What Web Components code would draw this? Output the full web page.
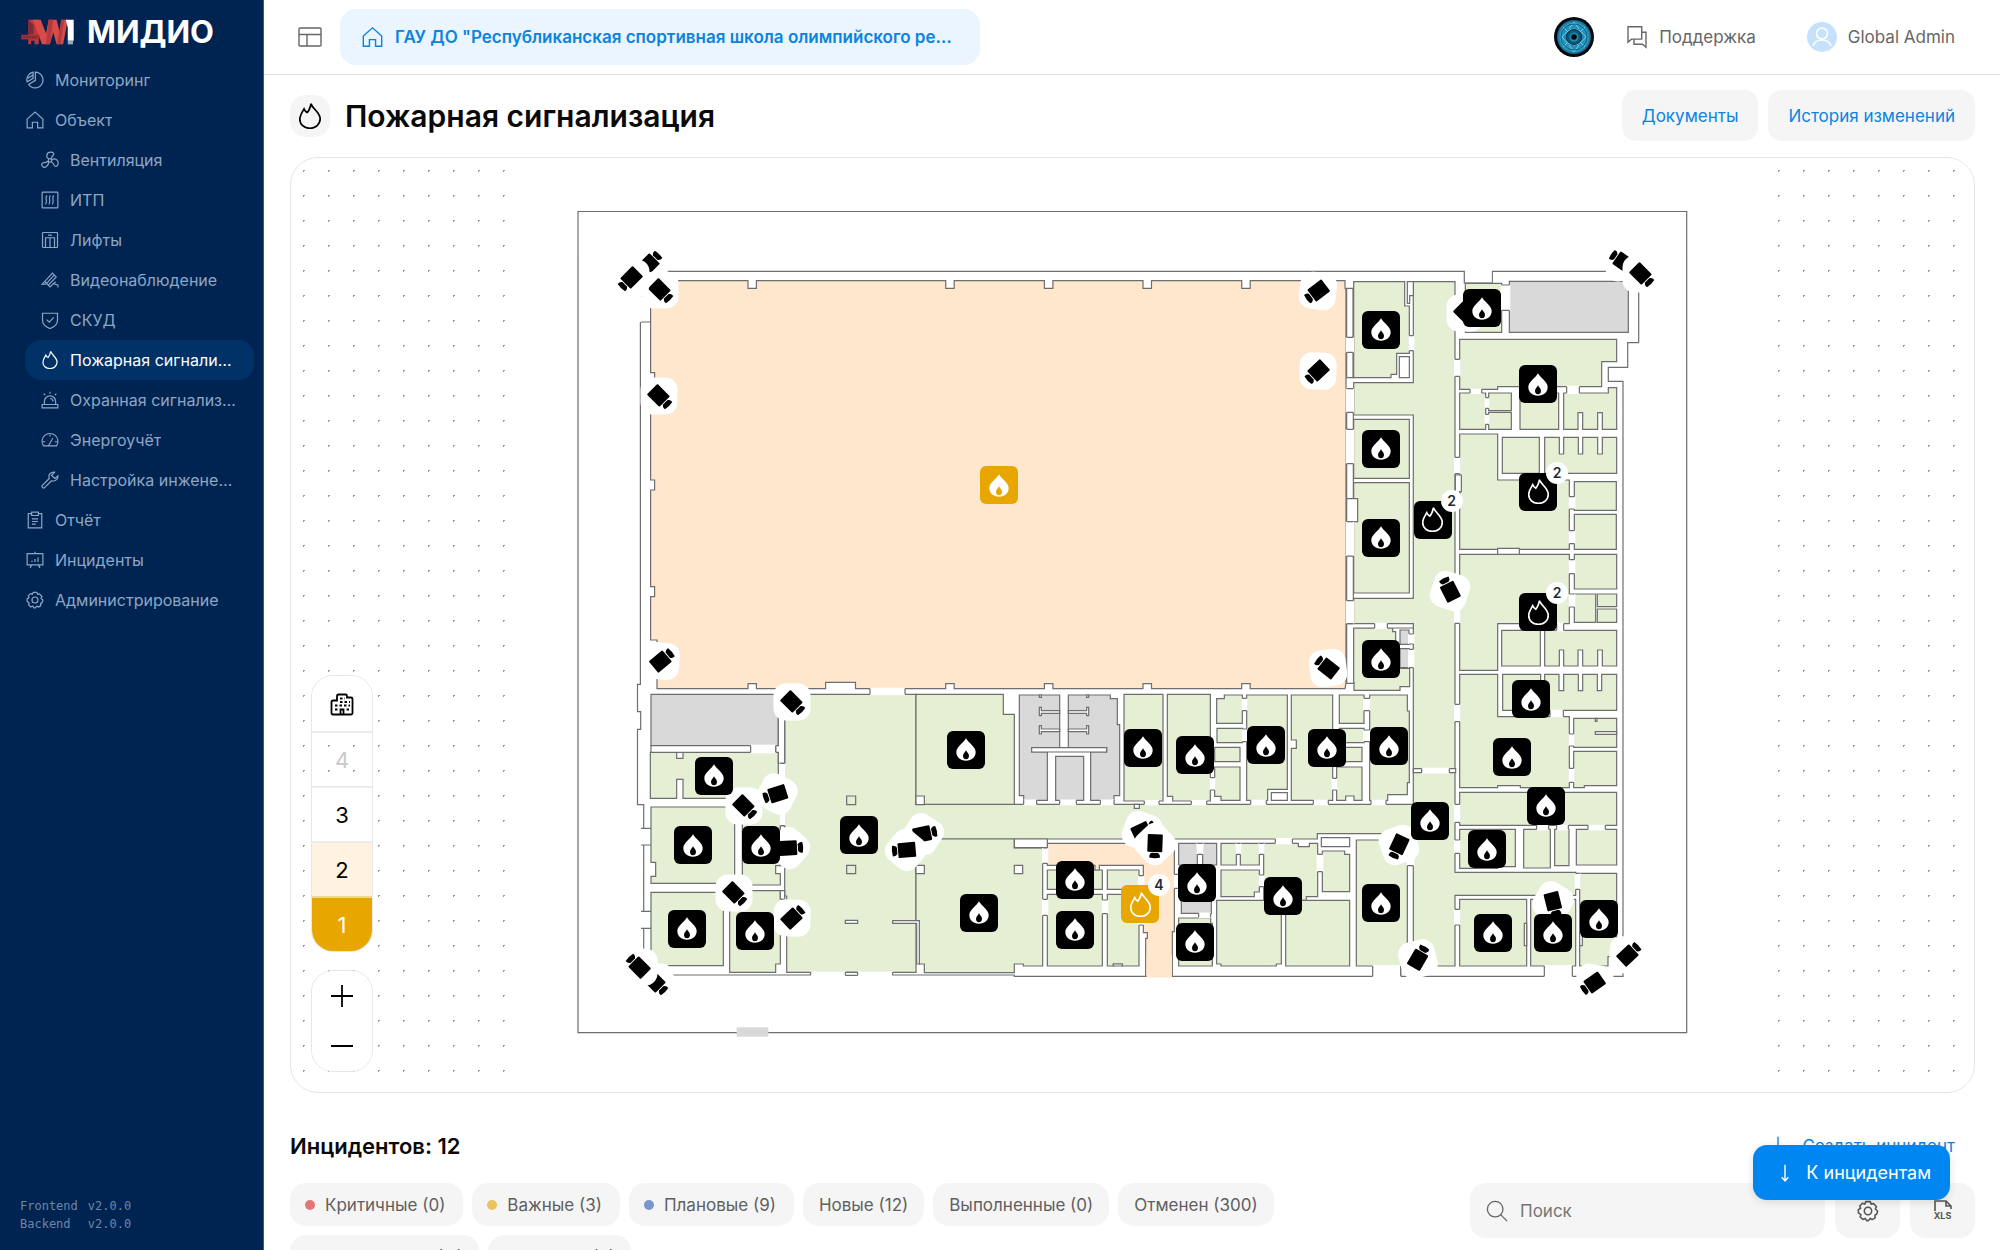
<!DOCTYPE html>
<html lang="ru">
<head>
<meta charset="utf-8">
<title>Пожарная сигнализация — Мидио</title>
<style>
html, body { margin: 0; height: 100%; }
body {
  font-family: Inter, "Noto Sans", sans-serif;
  font-size: 17px; line-height: 24px; color: #111; background: #fff; overflow: hidden;
  --navy: #002452; --navy-active: #003268; --nav-text: #8ea6c3; --blue: #0a84e0;
  --soft: #f5f5f5; --grey: #666; --line: #e6e6e6; --amber: #e8a600;
}
</style>
</head>
<body>
<app-shell>
  <side-bar slot="side"></side-bar>
  <top-bar slot="top"></top-bar>
  <page-title slot="main">Пожарная сигнализация</page-title>
  <floor-card slot="main"></floor-card>
  <incident-panel slot="main"></incident-panel>
  <jump-button slot="float">К инцидентам</jump-button>
</app-shell>

<script>
const FLAME = '<path d="M34 2C37 15 60 27 60 45C60 61 47 72 31 72C14 72 2 61 2 46C2 35 8 27 14 17C16 22 19 25 23 27C30 20 32 11 34 2Z" stroke-width="W"/>';
const ICONS = {
  monitor: ['0 0 24 24', '<path d="M12.500 1.500A10.500 10.500 0 1 1 3.500 18L12.500 12.500ZM9.500 1.500A10.500 10.500 0 0 0 1.500 14.500L9.500 9.800ZM2.500 9.500 9 5.800"/>'],
  home: ['0 0 24 24', '<path d="M1.500 10.800 12 1.500 22.500 10.800V22.500H15.500V15H8.500V22.500H1.500Z"/>'],
  fan: ['0 0 24 24', '<circle cx="12" cy="12.500" r="2.300"/><path d="M10.500 10.500C6 9 7 1.500 13 1.500C17 1.500 18 4 16 6C14 8 14 9 13.500 10.500M14.500 12C18 8.500 24 12 22.700 17.500C21.800 21 19 21.500 17.500 19C16.500 16.500 15.500 15.500 14 14.500M10 14C11 19 5 24 2 20.500C0 18 1 15.500 4 15.500C6.500 15.500 8 14.500 9.700 13.200"/>'],
  heat: ['0 0 24 24', '<rect x="1.500" y="1.500" width="21" height="21" rx="1"/><path d="M8 6C4 10 10 13 6 18M12.500 6C8.500 10 14.500 13 10.500 18M17 6C13 10 19 13 15 18"/>'],
  lift: ['0 0 24 24', '<rect x="2" y="2" width="20" height="20" rx="1"/><path d="M6 22V9H18V22M12 9V22M9.500 5.500H14.500"/>'],
  camera: ['0 0 26 24', '<path d="M5.500 14 16.500 2 22 7.500 10.500 19.500ZM8.500 16.500 19 5M5.500 14 1.500 18H7.500M10.500 19.500 13 22 21 14.500M18 17 24.500 19.500V23"/>'],
  shield: ['0 0 24 24', '<path d="M2 3H22V12C22 18 17.500 21.500 12 23.500C6.500 21.500 2 18 2 12ZM7.500 11.500 11 15 17 8.500"/>'],
  siren: ['0 0 24 24', '<path d="M4.500 18V14A7.500 7.500 0 0 1 19.500 14V18M1.500 18H22.500V22.500H1.500ZM12 10A4 4 0 0 1 16 14M12 1V3.500M3.500 3.500 5.500 5.500M20.500 3.500 18.500 5.500"/>'],
  gauge: ['0 0 26 24', '<path d="M3.500 20.500A11.500 11.500 0 1 1 22.500 20.500ZM11 20 17 9.500M13 4V7M2.500 14.500H6M20 14.500H23.500"/>'],
  wrench: ['0 0 24 24', '<path d="M16.500 1.500C12 2 9.500 5.500 11 10L1.500 19.500C0.500 21 3 23.500 4.500 22.500L14 13C19 14.500 23 10.500 22.500 6.500L18.500 10 14 6 18 1.700Z"/>'],
  report: ['0 0 24 24', '<path d="M7.500 3.500H3V22.500H21V3.500H16.500M7.500 1.500H16.500V6H7.500ZM8 10.500H16M8 14H16M8 17.500H13"/>'],
  board: ['0 0 24 24', '<path d="M1.500 3.500H22.500V18.500H1.500ZM12 1V3.500M7.500 18.500 5.500 22.500M16.500 18.500 18.500 22.500M8 13V14.500M12 10.500V14.500M16 8.500V14.500"/>'],
  gear: ['0 0 24 24', '<path d="M9.500 1.800H14.500L15.500 4.500 18 3.800 21.300 7.300 20 9.800 22.500 12 21.500 15.500 19.500 16.500 19.800 19.500 16.500 21.500 14.500 20 12.500 22.500H10.500L9 20 6.500 21.300 3.500 18.500 4.300 16 1.500 14V10.500L4 9 3 6.500 6 3.500 8.500 4.500Z" stroke-linejoin="round"/><circle cx="12" cy="12" r="4"/>'],
  layout: ['0 0 24 20', '<rect x="1" y="1" width="22" height="18" rx="1"/><path d="M1 7.500H23M9 7.500V19"/>'],
  chat: ['0 0 24 28', '<path d="M1.500 2H17.500V16.500H5.500L1.500 20ZM17.500 8.500H22.500V26L18.500 22.500H8.500V16.500"/>'],
  search: ['0 0 24 24', '<circle cx="10" cy="10" r="8.500"/><path d="M16 16 23 23"/>'],
  arrow: ['0 0 12 24', '<path d="M6 2V21M2 17 6 21.500 10 17"/>'],
  plus: ['0 0 24 24', '<path d="M12 1V23M1 12H23"/>'],
  minus: ['0 0 24 24', '<path d="M1 12H23"/>'],
  city: ['0 0 24 24', '<path d="M7 22.500H3Q1.500 22.500 1.500 21V10Q1.500 8.500 3 8.500H7V4Q7 2.500 8.500 2.500H15.500Q17 2.500 17 4V5.500H21Q22.500 5.500 22.500 7V21Q22.500 22.500 21 22.500ZM10.500 22.500V17.500H13.500V22.500"/><path stroke-dasharray="2.500 2" d="M10 6.500H15M10 10H20M5 13.500H20M5 17.500H9M16.500 17.500H20"/>'],
  flame: ['0 0 62 74', FLAME],
};

/* Shared base: renders a static template into an open shadow root. */
class Base extends HTMLElement {
  connectedCallback() {
    if (this.shadowRoot) return;
    this.attachShadow({ mode: 'open' }).innerHTML = this.view();
  }
}

customElements.define('ui-icon', class extends Base {
  view() {
    const [box, body] = ICONS[this.getAttribute('name')];
    const w = this.getAttribute('weight') || 1.6;
    return `<style>:host{display:inline-flex;flex:none;width:18px;height:18px}svg{width:100%;height:100%;fill:none;stroke:currentColor}</style>
    <svg viewBox="${box}" stroke-width="${w}" aria-hidden="true">${body.replace('"W"', `"${w}"`)}</svg>`;
  }
});

customElements.define('app-shell', class extends Base {
  view() {
    return `<style>
    :host{display:grid;grid-template-columns:264px minmax(0,1fr);height:100vh;overflow:hidden;position:relative}
    .col{display:flex;flex-direction:column;min-width:0;overflow:hidden}
    main{display:flex;flex-direction:column;padding:15px 25px 0 26px;min-height:0;overflow:hidden}
    </style><slot name="side"></slot><div class="col"><slot name="top"></slot><main><slot name="main"></slot></main></div><slot name="float"></slot>`;
  }
});

customElements.define('nav-item', class extends Base {
  view() {
    return `<style>
    :host{display:block}
    a{display:flex;align-items:center;gap:11px;height:40px;box-sizing:border-box;padding:0 16px 0 17px;border-radius:16px;color:var(--nav-text);text-decoration:none;font-size:16px}
    :host([sub]) a{margin-left:16px;padding-left:16px}
    :host([active]) a{background:var(--navy-active);color:#fff}
    span{overflow:hidden;text-overflow:ellipsis;white-space:nowrap}
    </style><a href="#"><ui-icon name="${this.getAttribute('icon')}" weight="${this.getAttribute('icon') === 'flame' ? 5 : 1.6}"></ui-icon><span><slot></slot></span></a>`;
  }
});

customElements.define('side-bar', class extends Base {
  view() {
    return `<style>
    :host{display:flex;flex-direction:column;background:var(--navy);border-right:1px solid #2f5f98;box-sizing:border-box}
    .logo{display:flex;align-items:center;gap:12px;height:60px;padding:4px 20px 0;box-sizing:border-box;color:#fff;font-size:31px;line-height:36px;font-weight:700}
    .logo svg{width:55px;height:28px}
    nav{flex:1;padding:0 9px}
    dl{display:grid;grid-template-columns:auto auto;justify-content:start;column-gap:10px;margin:0;padding:0 20px 17px;font:12px/18px "DejaVu Sans Mono","Liberation Mono",monospace;color:#6d86a6}
    dt,dd{margin:0}
    </style>
    <div class="logo"><svg viewBox="60 55 165 85" aria-hidden="true">
      <path fill="#b8383c" d="M84 60H116V135H103V124H93V135H84Z"/><path fill="#7a2b3c" d="M84 60 100 78V104H84Z"/>
      <path fill="#d94b49" d="M98 60H122L138 102 146 60H170L180 98 184 60H204L190 135H170L160 98 150 135H126Z"/>
      <path fill="#b43a40" d="M146 60H160L150 135H138ZM184 60H194L182 135H172Z"/>
      <path fill="#a03238" d="M63 106H118V120H63Z"/><path stroke="#5e1f2b" stroke-width="3" d="M68 113H112" stroke-dasharray="6 3"/>
      <path fill="#fff" d="M198 60H222V124H204V84Z"/><path fill="#8fa6c4" d="M204 124H220V135H204Z"/></svg>МИДИО</div>
    <nav>
      <nav-item icon="monitor">Мониторинг</nav-item><nav-item icon="home">Объект</nav-item>
      <nav-item sub icon="fan">Вентиляция</nav-item><nav-item sub icon="heat">ИТП</nav-item>
      <nav-item sub icon="lift">Лифты</nav-item><nav-item sub icon="camera">Видеонаблюдение</nav-item>
      <nav-item sub icon="shield">СКУД</nav-item><nav-item sub active icon="flame">Пожарная сигнализация</nav-item>
      <nav-item sub icon="siren">Охранная сигнализация</nav-item><nav-item sub icon="gauge">Энергоучёт</nav-item>
      <nav-item sub icon="wrench">Настройка инженерных систем</nav-item>
      <nav-item icon="report">Отчёт</nav-item><nav-item icon="board">Инциденты</nav-item><nav-item icon="gear">Администрирование</nav-item>
    </nav>
    <dl><dt>Frontend</dt><dd>v2.0.0</dd><dt>Backend</dt><dd>v2.0.0</dd></dl>`;
  }
});

customElements.define('top-bar', class extends Base {
  view() {
    return `<style>
    :host{display:flex;align-items:center;height:75px;flex:none;border-bottom:1px solid #e0e0e0;padding:0 45px 0 34px;color:var(--grey);box-sizing:border-box}
    button{font:inherit;color:inherit;border:0;background:none;padding:0;display:flex;align-items:center;cursor:pointer}
    .menu ui-icon{width:24px;height:24px}
    .site{margin-left:18px;width:640px;height:56px;padding:0 28px 0 22px;gap:12px;border-radius:16px;background:#eaf5ff;color:var(--blue);font-weight:600}
    .site ui-icon{width:21px;height:22px}
    .site span{overflow:hidden;text-overflow:ellipsis;white-space:nowrap}
    .eye{margin-left:auto;width:40px;height:40px}
    .eye svg{width:40px;height:40px}
    .help{margin-left:32px;gap:11px}.help ui-icon{width:22px;height:24px}
    .user{margin-left:51px;gap:11px}.user svg{width:30px;height:30px}
    </style>
    <button class="menu" aria-label="Меню"><ui-icon name="layout" weight="1.4"></ui-icon></button>
    <button class="site"><ui-icon name="home"></ui-icon><span>ГАУ ДО "Республиканская спортивная школа олимпийского резерва"</span></button>
    <button class="eye" aria-label="Наблюдение"><svg viewBox="0 0 40 40"><defs><radialGradient id="e"><stop offset="0" stop-color="#0d3f58"/><stop offset=".45" stop-color="#1b7ea8"/><stop offset=".8" stop-color="#2ba0cc"/><stop offset="1" stop-color="#15607f"/></radialGradient></defs>
      <circle cx="20" cy="20" r="20" fill="#04090e"/><circle cx="20" cy="20" r="17" fill="url(#e)"/>
      <g fill="none" stroke="#6fd0ea" stroke-width="1"><path d="M8 20Q20 4 32 20Q20 36 8 20ZM20 5 15 12M20 5 25 12M20 35 15 28M20 35 25 28M9 10 14 15M31 10 26 15M9 30 14 25M31 30 26 25"/><circle cx="20" cy="20" r="13" stroke="#10607f"/></g>
      <circle cx="20" cy="20" r="7.500" fill="#0f5878" stroke="#062c40"/><circle cx="20" cy="20" r="4.500" fill="#2089b0"/><circle cx="20" cy="20" r="2.800" fill="#020a10"/></svg></button>
    <button class="help"><ui-icon name="chat" weight="1.6"></ui-icon>Поддержка</button>
    <button class="user"><svg viewBox="0 0 30 30"><circle cx="15" cy="15" r="15" fill="#c6e1f9"/><g fill="none" stroke="#fff" stroke-width="1.600"><circle cx="15" cy="11.500" r="5.500"/><path d="M6 24Q8 18 15 18T24 24"/></g></svg>Global Admin</button>`;
  }
});

customElements.define('page-title', class extends Base {
  view() {
    return `<style>
    :host{display:flex;align-items:center;gap:10px;flex:none}
    .ic{display:flex;align-items:center;justify-content:center;width:40px;height:42px;border-radius:16px;background:var(--soft)}
    .ic ui-icon{width:22px;height:26px;color:#000}
    h1{margin:0 auto 0 5px;font-size:30px;line-height:38px;font-weight:600;color:#0a0a0a}
    button{font:inherit;height:51px;padding:0 20px;border:0;border-radius:14px;background:var(--soft);color:var(--blue);cursor:pointer}
    </style><span class="ic"><ui-icon name="flame" weight="5"></ui-icon></span><h1><slot></slot></h1><button>Документы</button><button>История изменений</button>`;
  }
});

/* ---------- Floor plan geometry ----------
   Every wing has its own origin; its figures are in thirds of a plan unit. */
const room = (cls, d) => `<path class="${cls}" d="${d}"/>`;
const vDoor = (x1, x2, y1, y2) => `<path class="w" d="M${x1 - 3} ${y1}H${x2 + 3}V${y2}H${x1 - 3}Z"/><path d="M${x1} ${y1}H${x2}M${x1} ${y2}H${x2}"/>`;
const hDoor = (y1, y2, x1, x2) => `<path class="w" d="M${x1} ${y1 - 3}H${x2}V${y2 + 3}H${x1}Z"/><path d="M${x1} ${y1}V${y2}M${x2} ${y1}V${y2}"/>`;
const WINGS = [
  { at: [1260, 230], g: [
    'M281 155H434V228H448V370H410V433H393V443H281Z', 'M281 568H448V745H281Z', 'M281 758H448V1089H281Z',
    'M599 328H1070V395H1025V470H713V478H599Z', 'M599 489H677V598H599Z', 'M686 489H754V542H686Z', 'M686 547H754V598H686Z', 'M780 489H896V598H780Z',
    'M911 489H1045V473H1070V598H1027V548H1013V598H968V548H954V598H911Z',
    'M599 612H713V750H928V958H599Z', 'M727 622H838V730H727Z', 'M854 622H898V672H911V622H955V672H968V622H1013V672H1027V622H1070V730H854Z',
    'M943 755H1069V841H943Z', 'M943 853H1069V958H943Z', 'M943 973H1070V1077H943Z', 'M943 1092H1007V1177H943Z', 'M1012 1092H1070V1130H1012Z', 'M1012 1137H1070V1177H1012Z',
    'M599 973H928V1181H713V1321H599Z', 'M725 1201H841V1308H725Z',
    'M854 1201H1070V1308H1027V1260H1013V1308H968V1260H954V1308H911V1260H898V1308H854Z', 'M616 160H725V307H616Z'],
    s: ['M748 154H1105V307H748Z'],
    wall: ['M260 175H279V443H260Z', 'M442 155V220H449V197H460V155Z', 'M418 380H448V443H418Z', 'M260 547H280V875H260Z', 'M260 806H293V875H260Z', 'M260 978H280V1112H260Z', 'M260 1181H460V1194H281V1360H260Z', 'M586 735H604V785H599V800H586Z', 'M713 955H778V973H713Z'],
    v: [[260, 279, 322, 367], [260, 279, 476, 547], [260, 280, 598, 701], [260, 280, 875, 978], [260, 280, 1112, 1181], [448, 460, 317, 362],
      [585, 599, 388, 439], [585, 599, 682, 731], [585, 599, 1070, 1180], [928, 943, 800, 837], [928, 943, 902, 941], [928, 943, 989, 1031], [928, 943, 1092, 1131], [725, 748, 165, 241], [677, 686, 503, 535], [677, 686, 553, 583]],
    h: [[478, 489, 630, 665], [470, 489, 920, 958], [1181, 1194, 344, 382], [1181, 1201, 890, 911]] },
  { at: [600, 680], g: [
    'M948 43H1210V103H1243V373H948Z', 'M948 477H1243V504H1328V858H1270V852H1243V878H973V852H958V722H948Z',
    'M151 217H230V235H249V217H535V355H249V298H230V355H151Z', 'M153 381H404V610H153V589H167V547H153Z',
    'M427 381H541V557H527V581H541V615H427Z', 'M153 637H370V857H153Z', 'M389 632H541V852H527V877H389Z',
    'M740 348H767V374H740Z', 'M740 556H767V581H740Z'],
    s: ['M153 43H535V197H153Z'],
    wall: ['M153 197H452V217H153Z', 'M527 197H535V43H554V250H535V217H527Z', 'M948 348H973V374H948Z', 'M948 556H973V581H948Z', 'M1243 556H1268V581H1243Z', 'M736 721H773V730H736Z', 'M736 877H773V886H736Z', 'M878 722H958V852H950V730H878Z', 'M541 437H554V557H541Z', 'M541 632H554V658H541Z'],
    v: [[541, 554, 250, 437], [541, 556, 658, 765]], h: [[877, 886, 632, 736], [877, 886, 773, 878], [26, 43, 810, 915], [197, 217, 452, 527]] },
  { at: [980, 680], g: [
    'M432 43H549V363H432Z', 'M562 43H691V363H578V349H562Z', 'M710 56H733V45H787V130H710Z', 'M711 145H787V188H711Z', 'M704 202H780V245H704Z', 'M704 261H780V361H723V349H704Z',
    'M800 45H922V328H863V361H800Z', 'M934 45H1058V361H934V205H949V180H934Z', 'M1078 45H1152V130H1078Z', 'M1078 145H1152V188H1078Z', 'M1070 202H1146V245H1070Z',
    'M1070 261H1146V361H1122V348H1097V361H1070Z', 'M1169 45H1282V93H1288V308H1282V344H1223V361H1169Z',
    'M202 570H367V628H202Z', 'M202 643H367V858H202Z', 'M382 570H477V628H382Z', 'M382 643H477V858H427V852H400V858H382Z',
    'M596 714H692V730H697V858H596Z', 'M723 490H769V555H723Z', 'M781 490H838V555H781Z', 'M851 490H955V500H988V490H1013V650H979V661H851Z', 'M723 570H838V636H823V650H723Z',
    'M710 661H904V852H889V858H723V852H710Z', 'M917 661H1109V858H917Z', 'M1027 513H1094V523H1109V635H1027Z', 'M1129 480H1282V858H1129Z'],
    s: ['M118 45H239V203H155V216H202V361H131V347H118Z', 'M265 45H391V56H412V134H419V347H402V361H332V216H380V203H265Z', 'M227 229H311V361H227Z', 'M596 490H652V555H596Z', 'M668 490H710V555H668Z', 'M604 600H694V700H604Z'],
    o: ['M202 490H583V755H577V889H497V775H502V758H490V556H358V570H345V556H202Z'],
    wall: ['M178 82H184V92H239V100H184V107H178Z', 'M178 137H184V147H239V155H184V162H178Z', 'M326 82H320V92H265V100H320V107H326Z', 'M326 137H320V147H265V155H320V162H326Z', 'M155 203H380V216H155Z', 'M874 338H922V361H874Z', 'M1024 473H1109V500H1024Z', 'M178 45H184V52H178Z', 'M320 45H326V52H320Z', 'M463 373H478V385H463Z', 'M103 477H202V503H103Z', 'M400 852H427V858H400Z'],
    v: [[691, 704, 293, 330], [787, 800, 55, 92], [787, 800, 147, 185], [1152, 1169, 55, 92], [1152, 1169, 150, 185], [1058, 1070, 295, 330], [189, 202, 504, 550], [189, 202, 658, 706],
      [367, 382, 660, 701], [477, 490, 587, 735], [583, 596, 583, 625], [838, 851, 490, 523], [838, 851, 585, 620], [1013, 1027, 523, 575], [769, 781, 490, 523], [652, 668, 490, 523], [1282, 1300, 490, 557]],
    h: [[361, 373, 131, 170], [361, 373, 239, 289], [361, 373, 361, 402], [363, 373, 493, 537], [363, 373, 634, 680], [361, 373, 812, 859], [361, 373, 1000, 1045], [361, 373, 1173, 1218], [477, 490, 886, 937], [700, 712, 656, 692], [858, 889, 1178, 1262]] },
  { at: [1340, 620], g: [
    'M40 24H158V35H167V145H209V200H180V211H42V188H40Z', 'M359 163H473V290H688V503H541V497H473V503H359Z', 'M488 163H602V271H488Z',
    'M614 163H657V212H671V163H715V212H728V163H772V212H785V163H830V271H614Z', 'M701 295H830V382H701Z', 'M701 394H830V497H733V503H701Z',
    'M359 517H830V616H359Z', 'M359 628H526V740H473V745H359Z', 'M551 628H631V744H551Z', 'M644 628H687V737H644Z', 'M709 628H830V735H709Z',
    'M719 760H830V1010H804V1038H719Z', 'M359 838H560V1038H359Z', 'M572 838H707V1038H572Z'],
    s: ['M180 30H207V73H180Z', 'M180 86H207V143H180Z'],
    wall: ['M766 295H771V304H766Z', 'M766 335H830V343H766Z', 'M553 910H560V977H553Z', 'M719 910H727V977H719Z', 'M220 446H245V458H220Z', 'M328 446H347V458H328Z'],
    v: [[688, 701, 342, 378], [688, 701, 445, 487], [345, 359, 253, 305], [345, 359, 553, 607], [345, 359, 660, 700], [345, 359, 868, 915], [707, 719, 760, 808], [207, 220, 42, 72], [207, 220, 88, 143]],
    h: [[271, 290, 630, 670], [616, 628, 590, 626], [616, 628, 650, 685], [616, 628, 744, 796], [446, 458, 245, 328], [1038, 1069, 98, 182], [1038, 1069, 613, 697]] },
];
const OUTLINE = 'M640.400 271.300H1464.300V283H1492.300V271.300H1638.700V342.700H1627.700V367.300H1608.300V381.300H1623V976.300H1014.300V975H643.700V804.700H637.500V729.300H640.700V711.700H637.500V684.300H640.400Z';
const HALL = 'M650.600 280.700H748V288.300H756.400V280.700H945.700V288.300H954.200V280.700H1044.400V288.300H1052.900V280.700H1143V288.300H1151.500V280.700H1241.700V288.300H1250.200V280.700H1345V288L1346 290V683L1345 688.700H1250.200V683.700H1241.700V688.700H1151.500V683.700H1143V688.700H1052.900V683.700H1044.400V688.700H954.200V683.700H945.700V688.700H855.500V682.300H825.600V688.700H756.400V683.700H748V688.700H657V640H650.600V596.700H654.600V586.700H650.600V490H654.600V480H650.600V383H654.600V372.700H650.600Z';
const CORRIDOR = 'M1413.300 281.700H1455V872.300H1575.700V895.300H1455V966H1413.300V833.700H1317.300V839H916V972.300H786.700V896H784.700V694.300H916V804.300H1413.300V623.700H1353.700V598.300H1413.300V415H1353.700V382.700H1413.300Z';

const CAMS = [[649.5, 264, -45], [660, 290, 45], [631, 278, 135], [659.3, 396.5, 45], [660.5, 661, -40], [1317.7, 290.7, 143], [1317.7, 371, 137], [1328.3, 668, 218], [1450.3, 591, 243],
  [1465.5, 312.5, 45], [1623, 262, 215], [1640.7, 274, 45], [792, 702, 45], [743.7, 806, 45], [776.7, 794.3, 162], [789.3, 848, -3], [734, 893.3, 45], [792, 917.7, -43],
  [923.3, 834.3, -12], [906, 850, 175], [654.7, 982.3, 45], [638.7, 967, 225], [1142.5, 831, -25], [1155, 844, 92], [1399, 845.3, 115], [1418.3, 958.7, -60], [1553, 902, 76], [1628.3, 955, -43], [1593.7, 983.3, 145]];
const FIRES = [[999, 485, 0, 'amber'], [1381, 329.7], [1481.7, 308], [1538, 384.3], [1381, 449], [1381, 538], [1432.7, 520, 2], [1538, 492, 2], [1538, 612.3, 2], [1381, 659.3],
  [714, 775.7], [966, 750], [692.7, 845], [761, 845], [858.7, 835.3], [687, 929], [755, 931.3], [979, 912.7], [1074.7, 879.7], [1074.7, 930], [1143.3, 748], [1195, 755], [1266.3, 745.3],
  [1326.7, 748], [1388.7, 746.3], [1140, 904.3, 4, 'amber'], [1197.3, 883.3], [1195, 942], [1283.3, 896], [1381.3, 903.3], [1430, 820.7], [1530.7, 699], [1511.7, 757], [1546, 806],
  [1487.3, 849], [1493.3, 932.7], [1553.3, 932.7], [1598.7, 919.3]];
const place = (x, y) => `left:${((x - 291) / 16.83).toFixed(3)}%;top:${((y - 158) / 9.34).toFixed(3)}%`;

customElements.define('camera-pin', class extends Base {
  view() {
    return `<style>:host{display:block;position:absolute;width:44px;height:44px;margin:-22px 0 0 -22px}svg{display:block}</style>
    <svg width="44" height="44" viewBox="-22 -22 44 44"><g transform="rotate(${this.getAttribute('angle')})">
    <rect x="-18.500" y="-18.500" width="37" height="37" rx="12" fill="#fff" transform="rotate(45)"/>
    <rect x="-9.700" y="-7.500" width="17.700" height="15" rx="1"/><path d="M8.900-3.200Q10.500-5.800 13.600-5.200Q14.800 0 13.600 5.200Q10.500 5.800 8.900 3.200Z"/></g></svg>`;
  }
});

customElements.define('fire-pin', class extends Base {
  view() {
    const n = +this.getAttribute('count');
    return `<style>
    :host{display:block;position:absolute;width:38px;height:38px;margin:-19px 0 0 -19px;--pin:#000}
    :host([tone=amber]){--pin:var(--amber)}
    button{width:38px;height:38px;padding:0;border:0;border-radius:6px;background:var(--pin);display:flex;align-items:center;justify-content:center;color:#fff;cursor:pointer}
    svg{width:20px;height:23px;display:block}ui-icon{width:21px;height:25px}
    b{position:absolute;right:-11px;top:-11px;width:22px;height:22px;border-radius:11px;background:#fff;color:#1e2a35;font-size:14px;line-height:22px;font-weight:600;text-align:center}
    </style><button aria-label="Датчик">${n ? '<ui-icon name="flame" weight="5"></ui-icon>' : '<svg viewBox="0 0 60 69"><path fill="#fff" d="M30 1C36 14 59 26 59 42C59 58 47 68 30 68S1 58 1 42C1 26 24 14 30 1Z"/><path style="fill:var(--pin)" d="M30 37C33 43 39 47 39 54C39 60 35 64 30 64S21 60 21 54C21 47 27 43 30 37Z"/></svg>'}</button>${n ? `<b>${n}</b>` : ''}`;
  }
});

customElements.define('floor-plan', class extends Base {
  view() {
    const wings = WINGS.map(w => `<g transform="translate(${w.at}) scale(.33333)" stroke-width="3.600">` +
      w.g.map(d => room('g', d)).join('') + (w.o || []).map(d => room('o', d)).join('') + w.s.map(d => room('s', d)).join('') + '</g>').join('');
    const details = WINGS.map(w => `<g transform="translate(${w.at}) scale(.33333)" stroke-width="3.600">` +
      w.wall.map(d => room('wl', d)).join('') + w.v.map(a => vDoor(...a)).join('') + w.h.map(a => hDoor(...a)).join('') + '</g>').join('');
    const outer = [[296, 322], [828.3, 845], [911.3, 928.3]].map(([a, b]) =>
      `<path class="w" d="M639 ${a}H650V${b}H639Z"/><path d="M641 ${a}H651M641 ${b}H651"/>`).join('');
    return `<style>
    :host{display:block;position:relative}
    svg.plan{display:block;width:100%;height:auto}
    .plan path{stroke:#6e6e6e;fill:none}.plan path.g{fill:#e4efd3}.plan path.o{fill:#fee7cc}.plan path.s{fill:#d9d9d9}
    .plan path.wl{fill:#fff}.plan path.w{fill:#fff;stroke:none}
    </style>
    <svg class="plan" viewBox="291 158 1683 934" stroke-width="1.200" role="img" aria-label="План этажа">
      <rect x="512" y="158" width="1256" height="934" fill="#fff"/>
      <path d="M578 211.500H1686.700V1032.600H578Z"/><rect x="736.700" y="1027.300" width="31.600" height="9.400" fill="#d9d9d9"/>
      <path d="${OUTLINE}"/><path class="o" d="${HALL}"/><path class="g" d="${CORRIDOR}"/>${wings}${outer}${details}
      <path class="w" d="M1465 269H1491.500V282H1465Z"/><path class="o" style="stroke:none" d="M1146.500 955H1172V977.500H1146.500Z"/>
    </svg>
    ${CAMS.map(([x, y, a]) => `<camera-pin angle="${a}" style="${place(x, y)}"></camera-pin>`).join('')}
    ${FIRES.map(([x, y, n, t]) => `<fire-pin count="${n || 0}" ${t ? `tone="${t}"` : ''} style="${place(x, y)}"></fire-pin>`).join('')}`;
  }
});

customElements.define('floor-card', class extends Base {
  view() {
    return `<style>
    :host{display:block;position:relative;flex:none;margin-top:16px;border:1px solid var(--line);border-radius:28px;overflow:hidden;background:#fff radial-gradient(circle,#9a9a9a 1px,transparent 1px) 0 0/25px 25px}
    .tools{position:absolute;left:20px;bottom:20px;width:62px;display:flex;flex-direction:column;gap:18px}
    .box{border:1px solid var(--line);border-radius:22px;overflow:hidden;display:flex;flex-direction:column}
    button{font:inherit;font-size:22px;color:#000;height:55px;border:0;border-top:2px solid #ececec;background:#fff;padding:0;display:flex;align-items:center;justify-content:center;cursor:pointer;box-sizing:border-box}
    button:first-child{border-top:0}
    .off{color:#c9c9c9;background:none}.warn{background:#fdf3e0}.on{background:var(--amber);border-color:#f0d695;color:#fff}
    .zoom button{height:50px;border:0}
    ui-icon{width:24px;height:24px}
    </style>
    <floor-plan></floor-plan>
    <div class="tools">
      <div class="box"><button aria-label="Здание"><ui-icon name="city" weight="1.800"></ui-icon></button><button class="off" disabled>4</button><button>3</button><button class="warn">2</button><button class="on">1</button></div>
      <div class="box zoom"><button aria-label="Приблизить"><ui-icon name="plus" weight="1.800"></ui-icon></button><button aria-label="Отдалить"><ui-icon name="minus" weight="1.800"></ui-icon></button></div>
    </div>`;
  }
});

customElements.define('filter-chip', class extends Base {
  view() {
    const dot = this.getAttribute('dot');
    return `<style>
    :host{display:block}
    button{display:flex;align-items:center;gap:10px;height:43px;padding:0 16px;border:0;border-radius:16px;background:var(--soft);font:inherit;color:#5f5f5f;white-space:nowrap;cursor:pointer}
    :host([dot]) button{padding:0 18px 0 15px}
    i{width:10px;height:10px;border-radius:5px;background:${dot}}
    </style><button>${dot ? '<i></i>' : ''}<span><slot></slot></span></button>`;
  }
});

customElements.define('incident-panel', class extends Base {
  view() {
    return `<style>
    :host{display:block;flex:none;margin-top:37px}
    .row{display:flex;align-items:center;justify-content:space-between}
    h2{margin:0;font-size:22px;line-height:32px;font-weight:600;color:#0a0a0a}
    button{font:inherit;border:0;cursor:pointer}
    .add{display:flex;align-items:center;gap:14px;background:none;color:var(--blue);padding:0 20px}
    .add ui-icon{width:20px;height:20px}
    .bar{display:flex;align-items:flex-start;gap:18px;margin-top:21px}
    .chips{flex:1;display:flex;flex-wrap:wrap;gap:9px}
    .find{display:flex;gap:10px}
    label{display:flex;align-items:center;gap:12px;width:355px;height:55px;box-sizing:border-box;padding:0 16px;border-radius:16px;background:var(--soft);color:var(--grey)}
    label ui-icon{width:22px;height:22px}
    input{flex:1;min-width:0;border:0;background:none;font:inherit;color:#333;outline:0;padding:0}
    input::placeholder{color:#757575;opacity:1}
    .sq{width:65px;height:55px;border-radius:16px;background:var(--soft);color:#555;display:flex;align-items:center;justify-content:center;padding:0}
    .sq ui-icon{width:22px;height:22px}
    .xls{flex-direction:column;font-size:9px;line-height:10px;font-weight:700}
    .xls svg{width:18px;height:11px;fill:none;stroke:currentColor;stroke-width:1.600}
    </style>
    <div class="row"><h2>Инцидентов: 12</h2><button class="add"><ui-icon name="plus"></ui-icon>Создать инцидент</button></div>
    <div class="bar"><div class="chips">
      <filter-chip dot="#e37777">Критичные (0)</filter-chip><filter-chip dot="#eac35c">Важные (3)</filter-chip><filter-chip dot="#7797c8">Плановые (9)</filter-chip>
      <filter-chip>Новые (12)</filter-chip><filter-chip>Выполненные (0)</filter-chip><filter-chip>Отменен (300)</filter-chip>
      <filter-chip>Просроченные (11)</filter-chip><filter-chip>Истекшие (0)</filter-chip></div>
      <div class="find"><label><ui-icon name="search" weight="1.400"></ui-icon><input type="search" placeholder="Поиск" aria-label="Поиск"></label>
      <button class="sq" aria-label="Настройки"><ui-icon name="gear" weight="1.700"></ui-icon></button>
      <button class="sq xls"><svg viewBox="0 0 18 11" aria-hidden="true"><path d="M1 11V1H12L17 6V9M12 1V6H17"/></svg>XLS</button></div></div>`;
  }
});

customElements.define('jump-button', class extends Base {
  view() {
    return `<style>
    :host{display:block;position:absolute;right:50px;bottom:50px}
    button{display:flex;align-items:center;gap:15px;height:55px;padding:0 19px 0 26px;border:0;border-radius:14px;background:#0086f0;color:#fff;font:inherit;font-size:18px;box-shadow:0 2px 8px rgba(0,0,0,.12);cursor:pointer}
    ui-icon{width:12px;height:20px}
    </style><button><ui-icon name="arrow" weight="1.700"></ui-icon><span><slot></slot></span></button>`;
  }
});
</script>
</body>
</html>
